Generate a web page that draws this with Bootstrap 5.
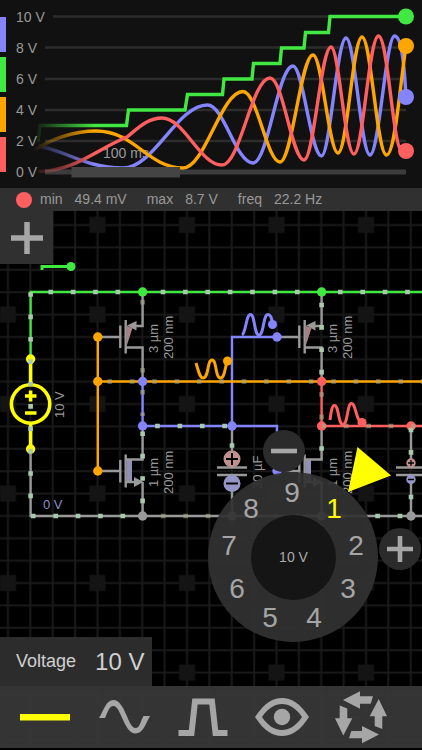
<!DOCTYPE html>
<html lang="en">
<head>
<meta charset="utf-8">
<meta name="viewport" content="width=device-width, initial-scale=1">
<title>Circuit simulator</title>
<link href="https://cdn.jsdelivr.net/npm/bootstrap@5.3.0/dist/css/bootstrap.min.css" rel="stylesheet">
<style>
  body { background: #000; color: #999; font-family: "Liberation Sans", Arial, sans-serif; font-size: 14px; }
  svg text { font-family: "Liberation Sans", Arial, sans-serif; }
  .flat-btn { background: none; border: 0; padding: 0; color: #a6a6a6; }
  .app { background: #000; }
  .scope { background: #111; z-index: 2; }
  .scope svg { height: auto; }
  .trace-keys { top: 17px; left: 0; width: 6px; gap: 5px; }
  .trace-keys button { height: 35px; }
  .key-blue { background: #8484ff; }
  .key-green { background: #42e842; }
  .key-orange { background: #ffa500; }
  .key-red { background: #ff5f5f; }
  .stats { background: #303030; height: 23px; padding-left: 16px; z-index: 2; }
  .stats dl > div { margin-right: 20px; }
  .stats dt { margin-right: 12px; }
  .stats-dot { width: 16px; height: 16px; margin-right: 8px; }
  .add-btn { width: 53px; height: 53px; background: #303030; }
  .board { overflow: visible; }
  .wires { fill: none; stroke-width: 2.4; }
  .part-label { font-size: 13px; fill: #999; }
  .dial { left: 208px; top: 261px; width: 170px; height: 170px; background: rgba(50, 50, 50, .93); }
  .dial-hub { left: 43px; top: 43px; width: 85px; height: 85px; background: #151515; color: #aaa; }
  .digit { width: 32px; height: 32px; font-size: 28px; line-height: 32px; color: #a6a6a6; }
  .digit.chosen { color: #ff0; }
  .digit:nth-of-type(1) { left: 110px; top: 21px; }
  .digit:nth-of-type(2) { left: 132px; top: 58px; }
  .digit:nth-of-type(3) { left: 124px; top: 101px; }
  .digit:nth-of-type(4) { left: 90px; top: 130px; }
  .digit:nth-of-type(5) { left: 46px; top: 130px; }
  .digit:nth-of-type(6) { left: 13px; top: 101px; }
  .digit:nth-of-type(7) { left: 5px; top: 58px; }
  .digit:nth-of-type(8) { left: 27px; top: 21px; }
  .digit:nth-of-type(9) { left: 68px; top: 5px; }
  .round-btn { width: 42px; height: 42px; background: #2b2b2b; }
  .minus-btn { left: 263px; top: 219px; }
  .plus-btn { left: 379px; top: 317px; }
  .pointer { left: 340px; top: 232px; }
  .readout { height: 49px; padding: 0 8px 0 16px; gap: 19px; background: #2c2c2c; color: #d0d0d0; }
  .readout label { font-size: 18px; }
  .readout output { font-size: 24px; }
  .tools { background: rgba(56, 56, 56, .92); height: 64px; padding: 0 22px 0 5px; border-bottom: 2px solid #000; z-index: 2; }
</style>
<script src="https://cdn.jsdelivr.net/npm/bootstrap@5.3.0/dist/js/bootstrap.bundle.min.js"></script>
</head>
<body>
<div class="app d-flex flex-column min-vh-100 overflow-hidden">

  <section class="scope position-relative" aria-label="Oscilloscope">
    <svg class="d-block w-100" viewBox="0 0 422 188">
      <defs>
        <linearGradient id="fade" gradientUnits="userSpaceOnUse" x1="32" y1="0" x2="95" y2="0">
          <stop offset="0" stop-color="#000"/><stop offset="1" stop-color="#fff"/>
        </linearGradient>
        <mask id="fadeMask" maskUnits="userSpaceOnUse" x="0" y="0" width="422" height="188"><rect width="422" height="188" fill="url(#fade)"/></mask>
      </defs>
      <path d="M53 16.500H406M45 47.500H406M45 79H406M45 110H406M45 141H406" stroke="#2c2c2c" stroke-width="2.600"/>
      <path d="M45 172H406" stroke="#3c3c3c" stroke-width="5"/>
      <g fill="#999" font-size="14">
        <text x="16" y="21.500">10 V</text><text x="16" y="53">8 V</text><text x="16" y="84">6 V</text>
        <text x="16" y="115">4 V</text><text x="16" y="146">2 V</text><text x="16" y="177">0 V</text>
        <text x="103" y="158">100 ms</text>
      </g>
      <g fill="none" stroke-width="3.400" stroke-linejoin="round" mask="url(#fadeMask)">
        <path stroke="#8484ff" d="M38 146C65 150 85 168 123 168C154 168 177 105 207.500 105C224 105 236 163 253 163C268 163 278 66 293 66C303 66 311 156 321.500 156C330 156 337 38 346 38C355 38 361 155 370 155C379 155 386 36 394.500 36C401 36 404 60 406 97"/>
        <path stroke="#ffa500" d="M34 150C52 139 73 131 96 131C135 131 148 168 183 168C205 168 221 91.500 243 91.500C257 91.500 267 162 280 162C292 162 301 55 313 55C322 55 329 153 338 153C347 153 353 37 362 37C371 37 377 155 386.500 155C395 155 400 85 406 46"/>
        <path stroke="#ff5f5f" d="M38 171.500C75 171 95 150 127 137C137 129 147 118 162 118C184 118 200 165 222 165C240 165 252 78 270 78C283 78 292 160 304 160C314 160 321 47 331 47C339 47 345 154 354 154C363 154 369 36 378.500 36C388 36 393 151 402 151H406"/>
        <path stroke="#42e842" stroke-linejoin="miter" d="M38 142L40 125.500H126.500L128.500 110H185L187.500 94.500H222.500L224 79H252L253.500 63.500H280L281.500 48H304L305.500 32.500H328.500L330 16.500H406"/>
      </g>
      <rect x="71.500" y="167" width="108.500" height="10.500" fill="#444"/>
      <circle cx="406" cy="16.500" r="8" fill="#42e842"/><circle cx="406" cy="97" r="8" fill="#8484ff"/>
      <circle cx="406" cy="46" r="8" fill="#ffa500"/><circle cx="406" cy="151" r="8" fill="#ff5f5f"/>
    </svg>
    <div class="trace-keys position-absolute d-flex flex-column">
      <button class="flat-btn key-blue" aria-label="Blue trace"></button>
      <button class="flat-btn key-green" aria-label="Green trace"></button>
      <button class="flat-btn key-orange" aria-label="Orange trace"></button>
      <button class="flat-btn key-red" aria-label="Red trace"></button>
    </div>
  </section>

  <section class="stats d-flex align-items-center">
    <span class="stats-dot rounded-circle key-red"></span>
    <dl class="d-flex mb-0">
      <div class="d-flex"><dt class="fw-normal">min</dt><dd class="mb-0">49.4 mV</dd></div>
      <div class="d-flex"><dt class="fw-normal">max</dt><dd class="mb-0">8.7 V</dd></div>
      <div class="d-flex"><dt class="fw-normal">freq</dt><dd class="mb-0">22.2 Hz</dd></div>
    </dl>
  </section>

  <main class="position-relative flex-grow-1 d-flex flex-column justify-content-between align-items-start">
    <svg class="board position-absolute top-0 start-0 w-100 h-100" role="img" aria-label="Circuit">
      <defs>
        <pattern id="grid" patternUnits="userSpaceOnUse" x="-25.500" y="191.500" width="89.500" height="89.500">
          <path d="M11.125 0V90M33.500 0V90M55.875 0V90M78.250 0V90M0 11.125H90M0 33.500H90M0 55.875H90M0 78.250H90" stroke="#191919" stroke-width="2"/>
          <rect x="25.500" y="25.500" width="16" height="16" fill="#141414"/>
        </pattern>
        <g id="pmos">
          <path d="M127 326L132.500 328L127 345Z" fill="#a88080"/>
          <path class="wires" stroke="#999" d="M97.800 337H120M120.300 325.500V348M125.700 320V353.500M142.600 292V326H131M126 347.500H142.600V381.500"/>
          <path d="M127 325.500L136.500 321V330.500Z" fill="#999"/>
        </g>
        <g id="nmos">
          <rect x="127" y="460" width="5" height="22" fill="#8f8fb8"/>
          <path class="wires" stroke="#999" d="M97.800 471H120M120.300 460V482.500M125.700 454.500V487.500M142.600 426V459.500H126M126 482H136M142.600 482V516"/>
          <path d="M143.500 482L134 477V487Z" fill="#999"/>
        </g>
      </defs>
      <g transform="translate(0 -211)">
        <rect width="100%" height="2400" fill="url(#grid)"/>
        <g class="wires">
          <path stroke="#999" d="M30.600 449V516H2400"/>
          <path stroke="#999" d="M232 426V467M232 475V516M411 426V467M411 475V516M217 467.500H247M217 475H247M396 467.500H426M396 475H426"/>
        </g>
        <use href="#pmos"/><use href="#pmos" x="179"/><use href="#nmos"/><use href="#nmos" x="179"/>
        <g class="wires">
          <path stroke="#42e842" d="M30.600 359V292H2400"/>
          <path stroke="#8484ff" d="M142.600 381.500V426H277V471M232 426V337H277"/>
          <path stroke="#ff5f5f" d="M321.600 381.500V426H2400"/>
          <path stroke="#ffa500" d="M97.800 337V471M97.800 381.500H2400"/>
        </g>
        <g fill="none" stroke="#ff0" stroke-width="3.600">
          <path d="M30.600 359V385M30.600 423V449M25 396H36.500M30.600 390.500V401.500M25 413H36.500"/>
          <circle cx="30.600" cy="404" r="19.200"/>
        </g>
        <g>
          <g fill="#42e842"><circle cx="142.600" cy="292" r="4.700"/><circle cx="321.600" cy="292" r="4.700"/><circle cx="71" cy="266.500" r="4.500"/></g>
          <g fill="#ffa500"><circle cx="97.800" cy="337" r="4.700"/><circle cx="97.800" cy="381.500" r="4.700"/><circle cx="97.800" cy="471" r="4.700"/><circle cx="227.500" cy="361" r="4.500"/></g>
          <g fill="#8484ff"><circle cx="142.600" cy="381.500" r="4.700"/><circle cx="142.600" cy="426" r="4.700"/><circle cx="232" cy="426" r="4.700"/><circle cx="277" cy="337" r="4.700"/><circle cx="277" cy="471" r="4.700"/><circle cx="272.500" cy="324.500" r="4.500"/></g>
          <g fill="#ff5f5f"><circle cx="321.600" cy="381.500" r="4.700"/><circle cx="321.600" cy="426" r="4.700"/><circle cx="411" cy="426" r="4.700"/><circle cx="362" cy="422.500" r="4.500"/></g>
          <g fill="#999"><circle cx="142.600" cy="516" r="4.700"/><circle cx="232" cy="516" r="4.700"/><circle cx="321.600" cy="516" r="4.700"/><circle cx="411" cy="516" r="4.700"/></g>
          <g fill="#ff0"><circle cx="30.600" cy="359" r="4.700"/><circle cx="30.600" cy="449" r="4.700"/></g>
        </g>
        <!-- moving charge markers -->
        <g fill="none" stroke="#a9c9ae" stroke-width="4.600" stroke-dasharray="4.600 17.775">
          <path d="M48.400 292H138M160.700 292H315M338 292H2400"/>
          <path d="M30.600 292.200V500"/>
          <path d="M31 516H126M155.200 426H230M375.300 516H404"/>
          <path d="M142.600 431.400V505M321.600 302.700V376M232 443.200V460"/>
          <path d="M321.600 446.200V456M411 427.700V458M411 494.700V500"/>
        </g>
        <g fill="none" stroke="#a9a98c" stroke-width="4.600" stroke-dasharray="4.600 17.775" stroke-opacity=".6">
          <path d="M161 516H360M107.500 381.500H2400M142.600 300V310M142.600 368V374M142.600 390V416"/>
          <path d="M321.600 392.200V420M321.600 426H2400"/>
        </g>
        <g stroke="#000" stroke-width="2">
          <circle cx="232" cy="459" r="8.500" fill="#c09090" stroke="none"/><path d="M226 459H238M232 453V465"/>
          <circle cx="232" cy="483.500" r="8.500" fill="#9595c8" stroke="none"/><path d="M226 483.500H238"/>
          <circle cx="411" cy="463" r="4.700" fill="#c09090" stroke="none"/><circle cx="411" cy="479.500" r="4.700" fill="#9595c8" stroke="none"/>
          <path stroke-width="1.300" d="M408 463H414M411 460V466M408 479.500H414"/>
        </g>
        <!-- node thumbnails -->
        <g fill="none" stroke-width="3">
          <path stroke="#42e842" d="M42 270V266.500H70"/>
          <path stroke="#ffa500" d="M196 363C199 373 200 378 203 378C209 378 207 360 212 360C217 360 215 378 220.500 378C225 378 225 366 227.500 361"/>
          <path stroke="#8484ff" d="M242 335C246 333 246 314.500 250.500 314.500C255 314.500 254 335 259 335C264 335 263 314.500 268 314.500C271 314.500 272 319 272.500 324"/>
          <path stroke="#ff5f5f" d="M330 420C331 412 332 405.500 334.500 405.500C339 405.500 338 424.500 343 424.500C348 424.500 347 403.500 351.500 403.500C356 403.500 356 422 362 422.500"/>
        </g>
        <g class="part-label">
          <text transform="translate(64 418) rotate(-90)">10 V</text>
          <text transform="translate(158 353) rotate(-90)">3 µm</text>
          <text transform="translate(173 359) rotate(-90)">200 nm</text>
          <text transform="translate(337 353) rotate(-90)">3 µm</text>
          <text transform="translate(352 359) rotate(-90)">200 nm</text>
          <text transform="translate(158 487) rotate(-90)">1 µm</text>
          <text transform="translate(173 494) rotate(-90)">200 nm</text>
          <text transform="translate(337 487) rotate(-90)">1 µm</text>
          <text transform="translate(352 494) rotate(-90)">200 nm</text>
          <text transform="translate(262 489) rotate(-90)">30 µF</text>
          <text x="43" y="509" fill="#8f8fc4">0 V</text>
        </g>
      </g>
    </svg>

    <button class="flat-btn add-btn position-relative d-flex align-items-center justify-content-center" aria-label="Add component">
      <svg width="32" height="32" viewBox="0 0 32 32"><path d="M0 16H32M16 0V32" stroke="currentColor" stroke-width="5.500"/></svg>
    </button>

    <button class="flat-btn round-btn minus-btn rounded-circle position-absolute d-flex align-items-center justify-content-center" aria-label="Decrease">
      <svg width="26" height="26" viewBox="0 0 26 26"><path d="M0 13H26" stroke="currentColor" stroke-width="4.600"/></svg>
    </button>
    <div class="dial position-absolute rounded-circle" role="group" aria-label="Voltage dial">
      <button class="flat-btn digit chosen position-absolute">1</button>
      <button class="flat-btn digit position-absolute">2</button>
      <button class="flat-btn digit position-absolute">3</button>
      <button class="flat-btn digit position-absolute">4</button>
      <button class="flat-btn digit position-absolute">5</button>
      <button class="flat-btn digit position-absolute">6</button>
      <button class="flat-btn digit position-absolute">7</button>
      <button class="flat-btn digit position-absolute">8</button>
      <button class="flat-btn digit position-absolute">9</button>
      <div class="dial-hub position-absolute rounded-circle d-flex align-items-center justify-content-center">10 V</div>
    </div>
    <svg class="pointer position-absolute" width="56" height="56" viewBox="340 443 56 56" aria-hidden="true"><path d="M357.500 447L391 475.500L348 492Z" fill="#ff0"/></svg>
    <button class="flat-btn round-btn plus-btn rounded-circle position-absolute d-flex align-items-center justify-content-center" aria-label="Increase">
      <svg width="26" height="26" viewBox="0 0 26 26"><path d="M0 13H26M13 0V26" stroke="currentColor" stroke-width="4.600"/></svg>
    </button>

    <div class="readout position-relative d-flex align-items-center">
      <label for="voltage">Voltage</label>
      <output id="voltage">10 V</output>
    </div>
  </main>

  <nav class="tools d-flex" aria-label="Source type">
    <button class="flat-btn flex-fill" aria-label="Constant">
      <svg width="56" height="56" viewBox="0 0 56 56"><rect x="3" y="25" width="50" height="6.500" fill="#ff0"/></svg>
    </button>
    <button class="flat-btn flex-fill" aria-label="Sine wave">
      <svg width="56" height="56" viewBox="0 0 56 56" fill="currentColor"><path d="M3 29C8 21 10 11 17.500 11C29 11 32 39 39.500 39C44 39 44 33 47.500 27H54C49 36 47 44.500 39.500 44.500C28 44.500 25 17 17.500 17C13 17 12 23 9 29Z"/></svg>
    </button>
    <button class="flat-btn flex-fill" aria-label="Square wave">
      <svg width="56" height="56" viewBox="0 0 56 56" fill="none" stroke="currentColor" stroke-width="6"><path d="M3.500 44H16.500L20 12.500H37L40.500 44H52.500"/></svg>
    </button>
    <button class="flat-btn flex-fill" aria-label="Show">
      <svg width="56" height="56" viewBox="0 0 56 56" fill="currentColor"><path fill-rule="evenodd" d="M1 28C10 14 19 9 28 9S46 14 55 28C46 42 37 47 28 47S10 42 1 28ZM8 28C14 37 21 41 28 41S42 37 48 28C42 19 35 15 28 15S14 19 8 28Z"/><circle cx="28" cy="28" r="8.200"/></svg>
    </button>
    <button class="flat-btn flex-fill" aria-label="Rotate">
      <svg width="56" height="56" viewBox="0 0 56 56" fill="currentColor">
        <g id="arrows"><path d="M10 11L27 2.300V7.300H40L37.700 14.700H27V19.700Z"/><path d="M45.700 10L54 27.300H49.300V40L41.700 37V27.300H36.700Z"/></g>
        <use href="#arrows" transform="rotate(180 28 28.300)"/>
      </svg>
    </button>
  </nav>
</div>
</body>
</html>
